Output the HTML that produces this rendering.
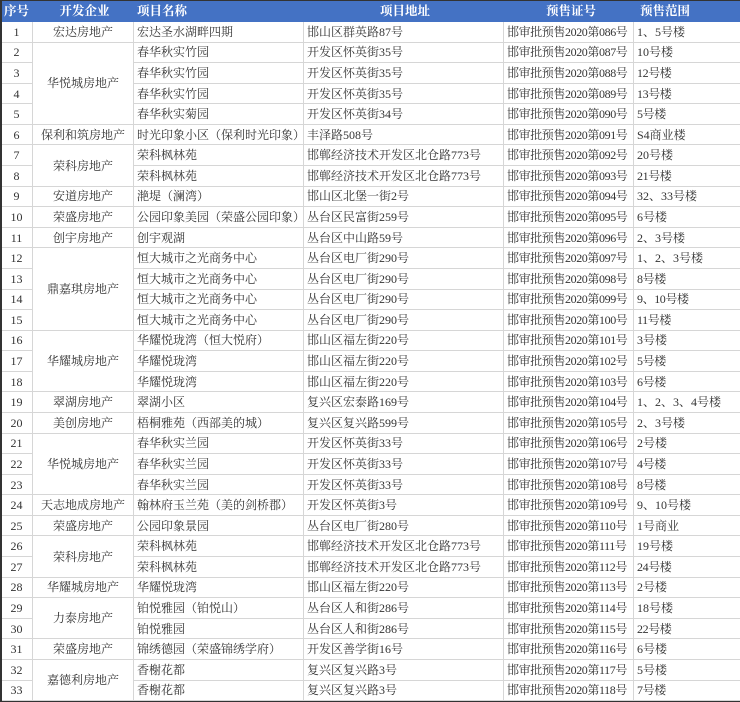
<!DOCTYPE html>
<html><head><meta charset="utf-8"><style>
body{margin:0;width:740px;height:702px;overflow:hidden;background:#fff;}
table{position:absolute;left:0;top:0;width:740px;border-collapse:collapse;table-layout:fixed;font-family:"Liberation Serif","Noto Serif CJK SC",serif;font-size:12px;color:#333;}
td,th{border:1px solid #d6d6d6;padding:0 0 0 3px;white-space:nowrap;overflow:hidden;line-height:14px;}
th{background:#4472c4;color:#fff;font-weight:bold;height:20px;border-color:#4472c4;font-size:12.5px;text-align:left}
tbody tr{height:20.58px}
td.c{text-align:center;padding:0}
td:nth-child(5),td.n{letter-spacing:-0.4px}
.wrap{position:absolute;left:0;top:0;width:738px;height:700px;border:1px solid #333;border-left:2px solid #333;pointer-events:none}
</style></head><body>
<table>
<colgroup><col style="width:32px"><col style="width:101px"><col style="width:170px"><col style="width:200px"><col style="width:130px"><col style="width:107px"></colgroup>
<thead><tr><th>序号</th><th style="text-align:center">开发企业</th><th>项目名称</th><th style="padding-left:76px">项目地址</th><th style="padding-left:42px">预售证号</th><th style="padding-left:6px">预售范围</th></tr></thead>
<tbody>
<tr><td class="c">1</td><td class="c">宏达房地产</td><td>宏达圣水湖畔四期</td><td>邯山区群英路87号</td><td>邯审批预售2020第086号</td><td>1、5号楼</td></tr>
<tr><td class="c">2</td><td class="c" rowspan="4">华悦城房地产</td><td>春华秋实竹园</td><td>开发区怀英街35号</td><td>邯审批预售2020第087号</td><td>10号楼</td></tr>
<tr><td class="c">3</td><td>春华秋实竹园</td><td>开发区怀英街35号</td><td class="n">邯审批预售2020第088号</td><td>12号楼</td></tr>
<tr><td class="c">4</td><td>春华秋实竹园</td><td>开发区怀英街35号</td><td class="n">邯审批预售2020第089号</td><td>13号楼</td></tr>
<tr><td class="c">5</td><td>春华秋实菊园</td><td>开发区怀英街34号</td><td class="n">邯审批预售2020第090号</td><td>5号楼</td></tr>
<tr><td class="c">6</td><td class="c">保利和筑房地产</td><td>时光印象小区（保利时光印象）</td><td>丰泽路508号</td><td>邯审批预售2020第091号</td><td>S4商业楼</td></tr>
<tr><td class="c">7</td><td class="c" rowspan="2">荣科房地产</td><td>荣科枫林苑</td><td>邯郸经济技术开发区北仓路773号</td><td>邯审批预售2020第092号</td><td>20号楼</td></tr>
<tr><td class="c">8</td><td>荣科枫林苑</td><td>邯郸经济技术开发区北仓路773号</td><td class="n">邯审批预售2020第093号</td><td>21号楼</td></tr>
<tr><td class="c">9</td><td class="c">安道房地产</td><td>滟堤（澜湾）</td><td>邯山区北堡一街2号</td><td>邯审批预售2020第094号</td><td>32、33号楼</td></tr>
<tr><td class="c">10</td><td class="c">荣盛房地产</td><td>公园印象美园（荣盛公园印象）</td><td>丛台区民富街259号</td><td>邯审批预售2020第095号</td><td>6号楼</td></tr>
<tr><td class="c">11</td><td class="c">创宇房地产</td><td>创宇观湖</td><td>丛台区中山路59号</td><td>邯审批预售2020第096号</td><td>2、3号楼</td></tr>
<tr><td class="c">12</td><td class="c" rowspan="4">鼎嘉琪房地产</td><td>恒大城市之光商务中心</td><td>丛台区电厂街290号</td><td>邯审批预售2020第097号</td><td>1、2、3号楼</td></tr>
<tr><td class="c">13</td><td>恒大城市之光商务中心</td><td>丛台区电厂街290号</td><td class="n">邯审批预售2020第098号</td><td>8号楼</td></tr>
<tr><td class="c">14</td><td>恒大城市之光商务中心</td><td>丛台区电厂街290号</td><td class="n">邯审批预售2020第099号</td><td>9、10号楼</td></tr>
<tr><td class="c">15</td><td>恒大城市之光商务中心</td><td>丛台区电厂街290号</td><td class="n">邯审批预售2020第100号</td><td>11号楼</td></tr>
<tr><td class="c">16</td><td class="c" rowspan="3">华耀城房地产</td><td>华耀悦珑湾（恒大悦府）</td><td>邯山区福左街220号</td><td>邯审批预售2020第101号</td><td>3号楼</td></tr>
<tr><td class="c">17</td><td>华耀悦珑湾</td><td>邯山区福左街220号</td><td class="n">邯审批预售2020第102号</td><td>5号楼</td></tr>
<tr><td class="c">18</td><td>华耀悦珑湾</td><td>邯山区福左街220号</td><td class="n">邯审批预售2020第103号</td><td>6号楼</td></tr>
<tr><td class="c">19</td><td class="c">翠湖房地产</td><td>翠湖小区</td><td>复兴区宏泰路169号</td><td>邯审批预售2020第104号</td><td>1、2、3、4号楼</td></tr>
<tr><td class="c">20</td><td class="c">美创房地产</td><td>梧桐雅苑（西部美的城）</td><td>复兴区复兴路599号</td><td>邯审批预售2020第105号</td><td>2、3号楼</td></tr>
<tr><td class="c">21</td><td class="c" rowspan="3">华悦城房地产</td><td>春华秋实兰园</td><td>开发区怀英街33号</td><td>邯审批预售2020第106号</td><td>2号楼</td></tr>
<tr><td class="c">22</td><td>春华秋实兰园</td><td>开发区怀英街33号</td><td class="n">邯审批预售2020第107号</td><td>4号楼</td></tr>
<tr><td class="c">23</td><td>春华秋实兰园</td><td>开发区怀英街33号</td><td class="n">邯审批预售2020第108号</td><td>8号楼</td></tr>
<tr><td class="c">24</td><td class="c">天志地成房地产</td><td>翰林府玉兰苑（美的剑桥郡）</td><td>开发区怀英街3号</td><td>邯审批预售2020第109号</td><td>9、10号楼</td></tr>
<tr><td class="c">25</td><td class="c">荣盛房地产</td><td>公园印象景园</td><td>丛台区电厂街280号</td><td>邯审批预售2020第110号</td><td>1号商业</td></tr>
<tr><td class="c">26</td><td class="c" rowspan="2">荣科房地产</td><td>荣科枫林苑</td><td>邯郸经济技术开发区北仓路773号</td><td>邯审批预售2020第111号</td><td>19号楼</td></tr>
<tr><td class="c">27</td><td>荣科枫林苑</td><td>邯郸经济技术开发区北仓路773号</td><td class="n">邯审批预售2020第112号</td><td>24号楼</td></tr>
<tr><td class="c">28</td><td class="c">华耀城房地产</td><td>华耀悦珑湾</td><td>邯山区福左街220号</td><td>邯审批预售2020第113号</td><td>2号楼</td></tr>
<tr><td class="c">29</td><td class="c" rowspan="2">力泰房地产</td><td>铂悦雅园（铂悦山）</td><td>丛台区人和街286号</td><td>邯审批预售2020第114号</td><td>18号楼</td></tr>
<tr><td class="c">30</td><td>铂悦雅园</td><td>丛台区人和街286号</td><td class="n">邯审批预售2020第115号</td><td>22号楼</td></tr>
<tr><td class="c">31</td><td class="c">荣盛房地产</td><td>锦绣德园（荣盛锦绣学府）</td><td>开发区善学街16号</td><td>邯审批预售2020第116号</td><td>6号楼</td></tr>
<tr><td class="c">32</td><td class="c" rowspan="2">嘉德利房地产</td><td>香榭花都</td><td>复兴区复兴路3号</td><td>邯审批预售2020第117号</td><td>5号楼</td></tr>
<tr><td class="c">33</td><td>香榭花都</td><td>复兴区复兴路3号</td><td class="n">邯审批预售2020第118号</td><td>7号楼</td></tr>
</tbody></table>
<div class="wrap"></div>
</body></html>
